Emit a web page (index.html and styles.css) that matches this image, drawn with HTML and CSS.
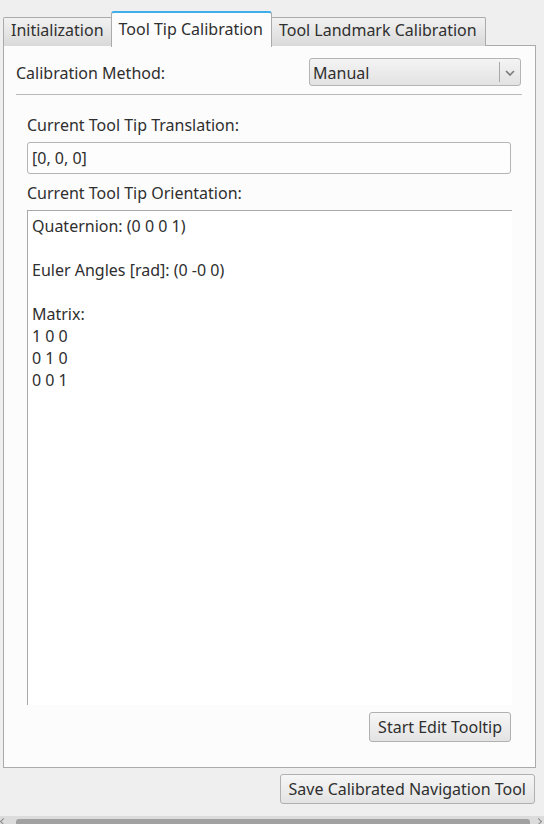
FILE: index.html
```html
<!DOCTYPE html>
<html>
<head>
<meta charset="utf-8">
<link rel="stylesheet" href="styles.css">
</head>
<body>
<div class="window">
  <div class="tabbar">
    <div class="tab">Initialization</div>
    <div class="tab tab-active">Tool Tip Calibration</div>
    <div class="tab">Tool Landmark Calibration</div>
  </div>
  <div class="pane">
    <div class="method-row">
      <span class="label">Calibration Method:</span>
      <div class="combo">
        <span class="combo-text">Manual</span>
        <span class="combo-sep"></span>
        <svg class="combo-arrow" width="10" height="6" viewBox="0 0 10 6"><path d="M1 1 L5 5 L9 1" fill="none" stroke="#7a7a7a" stroke-width="1.6"/></svg>
      </div>
    </div>
    <div class="hline"></div>
    <div class="group">
      <div class="label">Current Tool Tip Translation:</div>
      <div class="input">[0, 0, 0]</div>
      <div class="label label-second">Current Tool Tip Orientation:</div>
      <div class="textview">
        <div>Quaternion: (0 0 0 1)</div>
        <div>&nbsp;</div>
        <div>Euler Angles [rad]: (0 -0 0)</div>
        <div>&nbsp;</div>
        <div>Matrix:</div>
        <div>1 0 0</div>
        <div>0 1 0</div>
        <div>0 0 1</div>
      </div>
      <div class="btn-row">
        <div class="btn">Start Edit Tooltip</div>
      </div>
    </div>
  </div>
  <div class="save-row">
    <div class="btn btn-save">Save Calibrated Navigation Tool</div>
  </div>
  <div class="hscroll">
    <span class="arrow-left"></span>
    <div class="handle"></div>
    <span class="arrow-right"></span>
  </div>
</div>
</body>
</html>
```
FILE: styles.css
```css
html, body {
  margin: 0;
  padding: 0;
  background: #efefef;
}
body {
  font-family: "Noto Sans", "Open Sans", sans-serif;
  font-size: 16px;
  line-height: 22px;
  color: #2f2f2f;
  width: 544px;
  height: 824px;
  overflow: hidden;
}
.window {
  display: flex;
  flex-direction: column;
  height: 824px;
}
.tabbar {
  display: flex;
  align-items: flex-end;
  padding-left: 3px;
  margin-top: 11px;
  height: 35px;
  position: relative;
  z-index: 1;
}
.tab {
  box-sizing: border-box;
  height: 29px;
  padding: 1px 7px 0 7px;
  border: 1px solid #ababab;
  border-bottom: none;
  border-radius: 2px 2px 0 0;
  background: linear-gradient(#f2f2f2, #d9d9d9);
  white-space: nowrap;
}
.tab + .tab { margin-left: -1px; }
.tab:last-child { padding-right: 8px; }
.tab-active {
  padding-top: 5px;
  padding-right: 8px;
  background: #fcfcfc;
  border-top: 2px solid #3daee9;
  border-radius: 3px 3px 0 0;
  position: relative;
  z-index: 2;
  margin-bottom: -1px;
  height: 36px;
}
.pane {
  box-sizing: border-box;
  margin: -1px 8px 0 3px;
  height: 723px;
  border: 1px solid #ababab;
  background: #fcfcfc;
  padding: 12px 13px 0 12px;
  display: flex;
  flex-direction: column;
}
.method-row {
  display: flex;
  align-items: center;
  justify-content: space-between;
  height: 28px;
}
.method-row .label { padding-top: 2px; }
.combo {
  box-sizing: border-box;
  width: 212px;
  height: 28px;
  border: 1px solid #b4b4b4;
  border-radius: 3px;
  background: linear-gradient(#f4f4f4, #e2e2e2);
  display: flex;
  align-items: center;
  padding-left: 3px;
  margin-right: 1px;
}
.combo-text { flex: 1; padding-top: 2px; }
.combo-sep {
  width: 1px;
  height: 20px;
  background: #a8a8a8;
}
.combo-arrow {
  margin: 1px 5px 0 5px;
}
.hline {
  height: 1px;
  background: #b9b9b9;
  margin-top: 8px;
}
.group {
  display: flex;
  flex-direction: column;
  padding: 8px 11px 0 11px;
  flex: 1;
}
.group > .label {
  height: 22px;
  margin-top: 11px;
}
.group > .label-second {
  margin-top: 8px;
}
.input {
  box-sizing: border-box;
  height: 32px;
  margin-top: 6px;
  border: 1px solid #b4b4b4;
  border-radius: 3px;
  background: #fdfdfd;
  padding: 4px 4px;
}
.group > .label + .textview { margin-top: 6px; }
.textview {
  box-sizing: border-box;
  height: 495px;
  margin-right: -1px;
  border-top: 1px solid #a9a9a9;
  border-left: 1px solid #a9a9a9;
  background: #ffffff;
  padding: 4px 4px;
}
.btn-row {
  display: flex;
  justify-content: flex-end;
  margin-top: 7px;
}
.btn {
  box-sizing: border-box;
  height: 30px;
  padding: 3px 8px 0 8px;
  border: 1px solid #b0b0b0;
  border-radius: 3px;
  background: linear-gradient(#f6f6f6, #e3e3e3);
  white-space: nowrap;
}
.save-row {
  display: flex;
  justify-content: flex-end;
  margin: 6px 9px 0 0;
}
.hscroll {
  margin-top: 12px;
  height: 8px;
  background: #dcdcdc;
  display: flex;
  align-items: flex-end;
  position: relative;
}
.handle {
  margin-left: 16px;
  width: 514px;
  height: 5px;
  background: #a1a1a1;
  border-radius: 3px 3px 0 0;
}
.arrow-left, .arrow-right {
  position: absolute;
  bottom: 0;
  width: 4px;
  height: 4px;
  border-top: 1px solid #8a8a8a;
}
.arrow-left { left: 1px; border-left: 1px solid #8a8a8a; transform: rotate(-45deg); }
.arrow-right { right: 3px; border-right: 1px solid #8a8a8a; transform: rotate(45deg); }
```
